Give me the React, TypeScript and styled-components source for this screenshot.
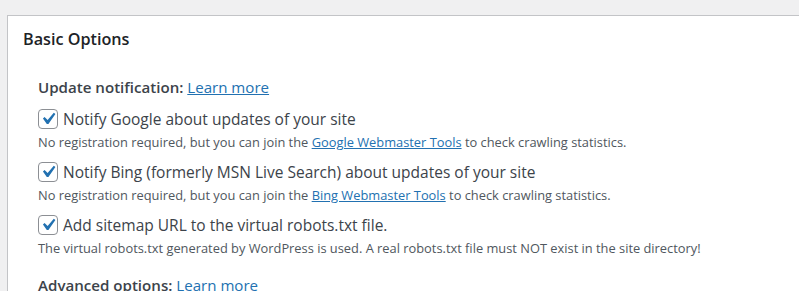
import React from "react";
import styled, { createGlobalStyle } from "styled-components";

const Global = createGlobalStyle`
  html, body { margin: 0; padding: 0; background: #f0f0f1; overflow: hidden; }
  body { font-family: "Open Sans", "Noto Sans", sans-serif; color: #3c434a; }
`;

const Page = styled.div`
  padding: 15px 0 0 7px;
  height: 291px;
  box-sizing: border-box;
`;

const Card = styled.div`
  background: #fff;
  border: 1px solid #c3c4c7;
  border-right: none;
  border-bottom: none;
  height: 100%;
  box-sizing: border-box;
  padding: 12px 0 0 15px;
`;

const Title = styled.h2`
  margin: 0;
  font-size: 16.2px;
  font-weight: 600;
  color: #1d2327;
  line-height: 22px;
`;

const Section = styled.div`
  padding: 27px 0 0 15px;
  display: flex;
  flex-direction: column;
`;

const Heading = styled.div`
  font-size: 15.1px;
  font-weight: 600;
  color: #3c434a;
  line-height: 20px;
  margin-bottom: 10px;
`;

const Link = styled.a`
  color: #2271b1;
  text-decoration: underline;
  font-weight: 400;
  cursor: pointer;
`;

const Option = styled.div`
  display: flex;
  flex-direction: column;
  margin-bottom: ${(p: { $last?: boolean }) => (p.$last ? "16px" : "7px")};
`;

const CheckRow = styled.label`
  display: flex;
  align-items: center;
  gap: 5px;
  font-size: 15.5px;
  line-height: 24px;
  color: #3c434a;
`;

const Box = styled.span`
  width: 20px;
  height: 20px;
  box-sizing: border-box;
  border: 1px solid #8c8f94;
  border-radius: 4px;
  background: #fff;
  display: flex;
  align-items: center;
  justify-content: center;
  flex-shrink: 0;
  overflow: visible;
`;

const Desc = styled.div`
  font-size: 12.85px;
  line-height: 22px;
  color: #50575e;
`;

const Check = () => (
  <Box>
    <svg width="24" height="24" viewBox="0 0 20 20" style={{ margin: "-3px" }}>
      <path d="M14.83 4.89l1.34.94-5.81 8.38H9.02L5.78 9.67l1.34-1.25 2.57 2.4z" fill="#2271b1" />
    </svg>
  </Box>
);

export default function App() {
  return (
    <>
      <Global />
      <Page>
        <Card>
          <Title>Basic Options</Title>
          <Section>
            <Heading>
              Update notification: <Link>Learn more</Link>
            </Heading>
            <Option>
              <CheckRow>
                <Check />
                Notify Google about updates of your site
              </CheckRow>
              <Desc>
                No registration required, but you can join the <Link>Google Webmaster Tools</Link> to check crawling statistics.
              </Desc>
            </Option>
            <Option>
              <CheckRow>
                <Check />
                Notify Bing (formerly MSN Live Search) about updates of your site
              </CheckRow>
              <Desc>
                No registration required, but you can join the <Link>Bing Webmaster Tools</Link> to check crawling statistics.
              </Desc>
            </Option>
            <Option $last>
              <CheckRow>
                <Check />
                Add sitemap URL to the virtual robots.txt file.
              </CheckRow>
              <Desc>
                The virtual robots.txt generated by WordPress is used. A real robots.txt file must NOT exist in the site directory!
              </Desc>
            </Option>
            <Heading>
              Advanced options: <Link>Learn more</Link>
            </Heading>
          </Section>
        </Card>
      </Page>
    </>
  );
}
